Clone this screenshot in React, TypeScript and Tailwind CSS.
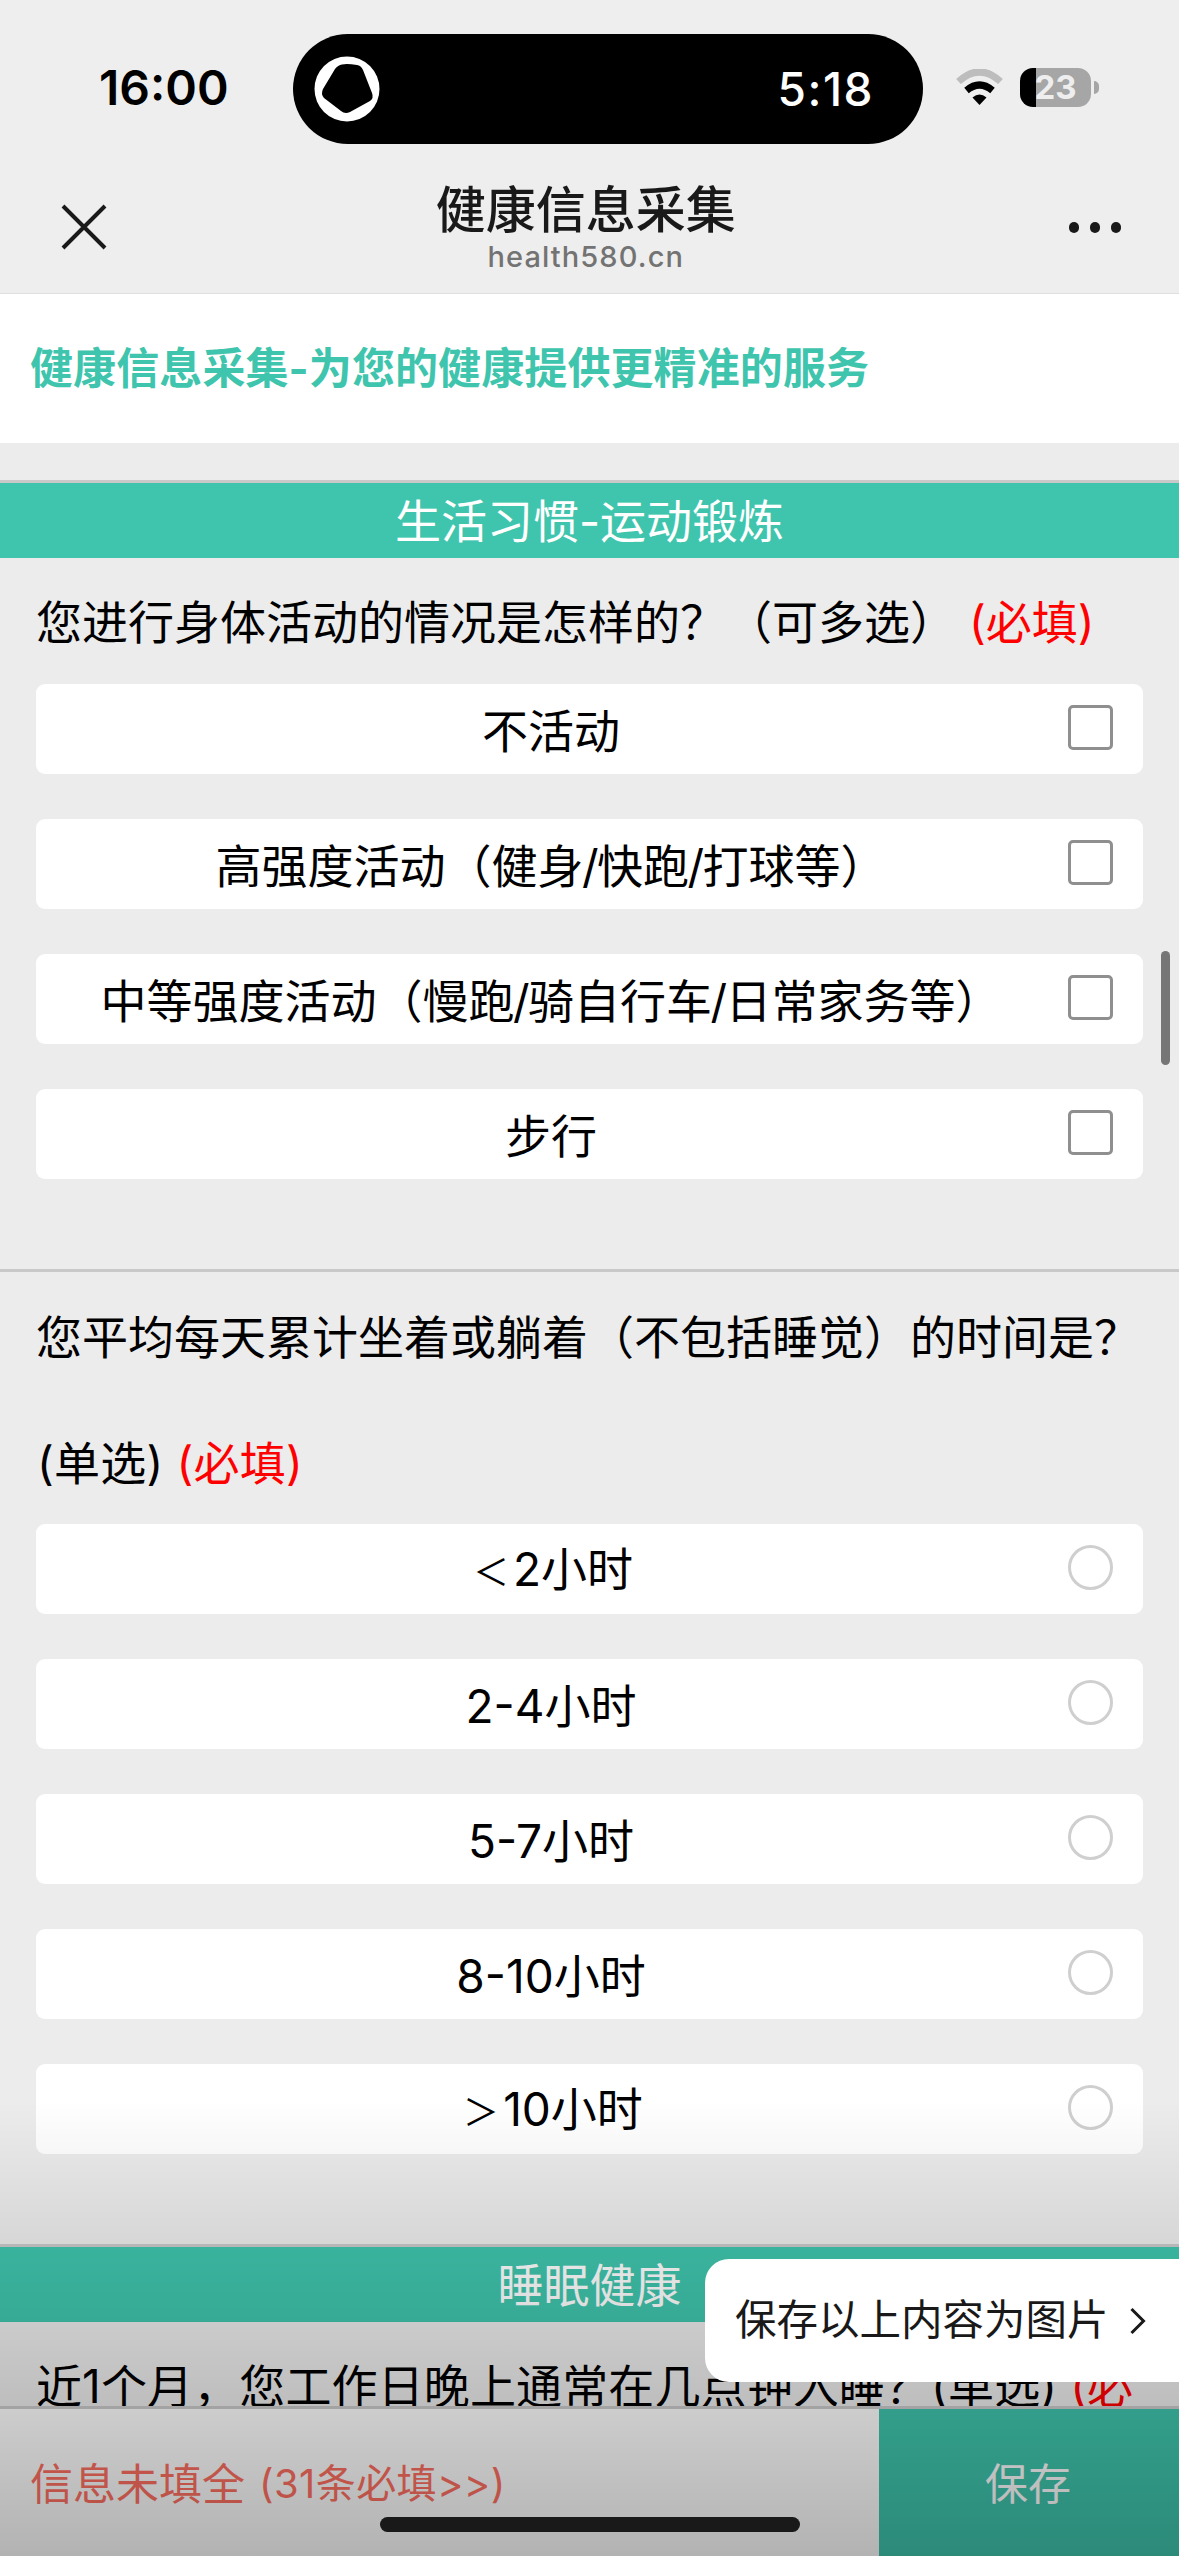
import React from 'react';

const activities = [
  '不活动',
  '高强度活动（健身/快跑/打球等）',
  '中等强度活动（慢跑/骑自行车/日常家务等）',
  '步行',
];

const hours = ['＜2小时', '2-4小时', '5-7小时', '8-10小时', '＞10小时'];

const StatusBar = () => {
  return (
    <div className="relative flex h-[177px] items-start">
      <span className="ml-[99px] mt-[59px] w-[194px] text-[48px] leading-[58px] font-semibold text-black">16:00</span>
      <div className="mt-[34px] flex h-[110px] w-[630px] items-center justify-between rounded-full bg-black pl-[21px] pr-[49px]">
        <svg width="66" height="66" viewBox="0 0 66 66">
          <circle cx="33" cy="33" r="32.5" fill="#fff" />
          <path d="M28 8.500 Q33 7.500 43 9 Q47 9.500 49 14 L58 37 Q60 42 56 45 L36 56 Q31 58.500 27 55 L10 42 Q6.500 38 9 33 L21 13 Q24 9 28 8.500Z" fill="#000" />
        </svg>
        <span className="text-[46px] leading-[56px] font-medium tracking-[1.500px] text-white">5:18</span>
      </div>
      <svg className="ml-[33px] mt-[69px]" width="47" height="37" viewBox="0 0 47 37">
        <path d="M2.500 12.500 Q23.500 -6.500 44.500 12.500" fill="none" stroke="#bdbdbd" strokeWidth="7" />
        <path d="M10.500 21.500 Q23.500 10.500 36.500 21.500" fill="none" stroke="#000" strokeWidth="7" />
        <path d="M16.500 28.500 Q23.500 22.500 30.500 28.500 L23.500 36Z" fill="#000" />
      </svg>
      <div className="ml-[17px] mt-[68px] h-[39px] w-[71px] rounded-[13px] bg-gradient-to-r from-black from-[23%] to-[#a6a6a6] to-[23%] text-center text-[33px] leading-[39px] font-bold text-[#eee]">
        23
      </div>
      <div className="ml-[3px] mt-[81px] h-[13px] w-[5px] rounded-r-full bg-[#a6a6a6]" />
    </div>
  );
};

const NavBar = () => {
  return (
    <div className="flex h-[117px] items-start justify-between border-b border-[#dfdfdf] text-[#191919]">
      <svg className="ml-[61px] mt-[27px]" width="46" height="46" viewBox="0 0 46 46">
        <path d="M2 2 L44 44 M44 2 L2 44" stroke="#191919" strokeWidth="4" />
      </svg>
      <div className="mr-[4px] flex flex-col items-center">
        <h1 className="text-[50px] leading-[66px] font-medium">健康信息采集</h1>
        <p className="text-[29px] leading-[28px] tracking-[1.100px] font-medium text-[#737373]">health580.cn</p>
      </div>
      <div className="mr-[58px] mt-[45px] flex gap-[10.500px]">
        <i className="size-[10.500px] rounded-full bg-[#191919]" />
        <i className="size-[10.500px] rounded-full bg-[#191919]" />
        <i className="size-[10.500px] rounded-full bg-[#191919]" />
      </div>
    </div>
  );
};

const SectionTitle = ({ children }: { children: React.ReactNode }) => {
  return (
    <h2 className="h-[78px] border-t-3 border-[#c9c9c9] bg-[#3fc5ad] text-center text-[46px] leading-[76px] text-white">
      {children}
    </h2>
  );
};

const Required = () => <span className="text-[#f00]">(必填)</span>;

// slashes sit tight against their neighbours, comparison signs are drawn smaller
const OptionLabel = ({ label }: { label: string }) => {
  return (
    <>
      {label.split(/([/＜＞])/).map((part, i) => {
        if (part === '/') return <span key={i} className="-mx-[1.500px]">/</span>;
        if (part === '＜' || part === '＞') {
          return <span key={i} className="inline-block w-[44px] text-center text-[36px]">{part}</span>;
        }
        return part;
      })}
    </>
  );
};

const Option = ({ label, type }: { label: string; type: 'checkbox' | 'radio' }) => {
  return (
    <label className="mb-[45px] flex h-[90px] items-center rounded-[9px] bg-white pr-[30px]">
      <span className="flex-1 pr-[2px] pt-[3px] text-center text-[46px] leading-[90px]">
        <OptionLabel label={label} />
      </span>
      {type === 'checkbox' ? (
        <i className="mb-[3px] size-[45px] rounded-[5px] border-3 border-[#8f8f8f]" />
      ) : (
        <i className="mb-[3px] size-[45px] rounded-full border-3 border-[#cfcfcf]" />
      )}
    </label>
  );
};

const App = () => {
  return (
    <div className="relative flex h-[2556px] w-[1179px] flex-col overflow-hidden bg-[#ececec] font-['Inter','Noto_Sans_CJK_SC',sans-serif] text-black">
      <header className="bg-[#eee]">
        <StatusBar />
        <NavBar />
      </header>

      <main className="h-[2112px] overflow-hidden">
        <div className="mb-[37px] h-[149px] bg-white pl-[30px] text-[43px] leading-[149px] font-bold tracking-[0.100px] text-[#3fc5ad]">
          健康信息采集-为您的健康提供更精准的服务
        </div>

        <SectionTitle>生活习惯-运动锻炼</SectionTitle>
        <section className="px-9 pb-[45px]">
          <p className="h-[126px] whitespace-nowrap text-[46px] leading-[129px]">
            您进行身体活动的情况是怎样的？（可多选） <Required />
          </p>
          {activities.map((item) => (
            <Option key={item} label={item} type="checkbox" />
          ))}
        </section>

        <section className="border-t-3 border-[#c9c9c9] px-9 pb-[45px]">
          <p className="h-[252px] pt-[2px] text-[46px] leading-[126px]">
            您平均每天累计坐着或躺着（不包括睡觉）的时间是？
            <br />
            <span className="ml-[1px] tracking-[0.200px]">(单选) <Required /></span>
          </p>
          {hours.map((item) => (
            <Option key={item} label={item} type="radio" />
          ))}
        </section>

        <SectionTitle>睡眠健康</SectionTitle>
        <p className="whitespace-nowrap px-9 text-[46px] leading-[129px] tracking-[0.120px]">
          近1个月，您工作日晚上通常在几点钟入睡？(单选) <span className="text-[#f00]">(必</span>
        </p>
      </main>

      <footer className="flex h-[150px] border-t-3 border-[#cbcbcb] bg-white">
        <div className="flex flex-1 items-center pl-[30px] pt-[3px] text-[43px] text-[#ff7062]">
          信息未填全<span className="ml-[14px] text-[40px] tracking-[0.400px]">(31条必填&gt;&gt;)</span>
        </div>
        <button className="w-[300px] bg-[#3fc5ad] pt-[3px] pr-[2px] text-[43px] text-white">保存</button>
      </footer>

      {/* scroll thumb */}
      <div className="absolute top-[951px] right-[9px] h-[114px] w-[9px] rounded-full bg-[#767676]" />

      {/* bottom shade */}
      <div className="absolute inset-x-0 bottom-0 h-[456px] bg-gradient-to-b from-transparent via-black/14 via-[49%] to-black/30" />

      <div className="absolute top-[2259px] right-0 flex h-[123px] w-[474px] items-center rounded-l-[24px] bg-white pl-[30px] text-[41.500px] text-[#191919]">
        保存以上内容为图片
        <svg className="ml-[20px]" width="18" height="28" viewBox="0 0 18 28">
          <path d="M2.500 2 L14.500 14 L2.500 26" fill="none" stroke="#191919" strokeWidth="3" />
        </svg>
      </div>

      {/* home indicator */}
      <div className="absolute bottom-[24px] left-[380px] h-[15px] w-[420px] rounded-full bg-[#191919]" />
    </div>
  );
};

export default App;
